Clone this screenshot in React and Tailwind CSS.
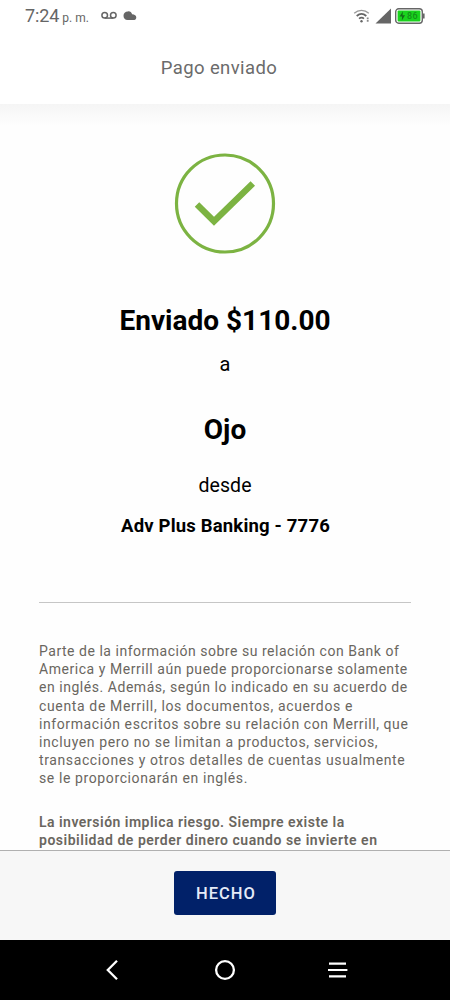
import clsx from 'clsx'

const notice = [
  ['Parte de la información sobre su relación con Bank of', 'tracking-[0.52px]'],
  ['America y Merrill aún puede proporcionarse solamente', 'tracking-[0.55px]'],
  ['en inglés. Además, según lo indicado en su acuerdo de', 'tracking-[0.54px]'],
  ['cuenta de Merrill, los documentos, acuerdos e', 'tracking-[0.64px]'],
  ['información escritos sobre su relación con Merrill, que', 'tracking-[0.59px]'],
  ['incluyen pero no se limitan a productos, servicios,', 'tracking-[0.61px]'],
  ['transacciones y otros detalles de cuentas usualmente', 'tracking-[0.61px]'],
  ['se le proporcionarán en inglés.', 'tracking-[0.61px]'],
]

const risk = [
  ['La inversión implica riesgo. Siempre existe la', 'tracking-[0.48px]'],
  ['posibilidad de perder dinero cuando se invierte en', 'tracking-[0.52px]'],
]

function Lines({ items, className }) {
  return (
    <p className={clsx('whitespace-nowrap text-[14px] leading-[18.2px] text-[#6a665f]', className)}>
      {items.map(([line, tracking]) => (
        <span key={line} className={clsx('block', tracking)}>{line}</span>
      ))}
    </p>
  )
}

function StatusBar() {
  return (
    <div className="flex h-8 items-center justify-between pl-[25px] pr-[25px] text-[#666]">
      <div className="flex items-center">
        <span className="text-[18px] leading-8 tracking-[-0.1px]">7:24</span>
        <span className="ml-[3px] mt-[4px] text-[12px] leading-8">p. m.</span>
        <svg className="ml-3 h-4 w-4" viewBox="0 0 16 16" fill="none" stroke="currentColor" strokeWidth="1.5">
          <circle cx="3.7" cy="7.3" r="2.8" />
          <circle cx="12.3" cy="7.3" r="2.8" />
          <path d="M3.7 10.1h8.6" />
        </svg>
        <svg className="ml-[6px] h-4 w-[14px]" viewBox="0 0 14 16" fill="currentColor">
          <path d="M4.8 3.4a4 4 0 0 1 4.3 2.9c2.4 0 4.2 1.3 4.2 3.1 0 1.6-1.2 2.6-3 2.6H4.6C2 12 .5 10 .5 7.7c0-2.4 1.8-4.3 4.3-4.3z" />
        </svg>
      </div>
      <div className="flex items-center">
        <svg className="h-4 w-[17px]" viewBox="0 0 17 16" fill="none" stroke="currentColor">
          <path d="M1.2 5.2C5.4 1.3 11.6 1.3 15.8 5.2" stroke="#999" strokeWidth="1.3" />
          <path d="M3.7 8C6.6 5.4 10.4 5.4 13.3 8" strokeWidth="1.8" />
          <path d="M6 10.7c1.6-1.3 3.5-1.3 5 0" strokeWidth="1.6" />
          <circle cx="8.5" cy="13.2" r="1.2" fill="currentColor" stroke="none" />
          <path d="M14.7 9.6v1.6M14.7 12v1.8" strokeWidth="1.8" stroke="#888" />
        </svg>
        <svg className="ml-[5px] h-4 w-4" viewBox="0 0 16 16" fill="currentColor">
          <path d="M16 .5v15H.5z" />
        </svg>
        <svg className="ml-1 h-4 w-[30px]" viewBox="0 0 30 16">
          <rect x=".7" y=".8" width="26.6" height="14.4" rx="3" fill="#fff" stroke="#666" strokeWidth="1.4" />
          <path d="M28 5.5h1.6v5H28z" fill="#666" />
          <rect x="2.6" y="2.6" width="22.8" height="10.8" rx="1" fill="#19d31d" />
          <path d="M8 3.3 4.6 8.6h2.5L6.8 12.6 10 7.3H7.5z" fill="#146b18" />
          <text x="12" y="11.4" fontSize="9" fontWeight="500" fill="#139019" letterSpacing=".3">86</text>
        </svg>
      </div>
    </div>
  )
}

function NavBar() {
  return (
    <nav className="flex h-[60px] items-center justify-between bg-black px-[100px] text-white">
      <svg className="h-6 w-6" viewBox="0 0 24 24" fill="none" stroke="currentColor" strokeWidth="2.3">
        <path d="M17 2.8 7.8 12l9.2 9.2" />
      </svg>
      <svg className="h-6 w-6" viewBox="0 0 24 24" fill="none" stroke="currentColor" strokeWidth="2.3">
        <circle cx="12" cy="12" r="8.9" />
      </svg>
      <svg className="h-6 w-6" viewBox="0 0 24 24" fill="none" stroke="currentColor" strokeWidth="2.2">
        <path d="M3 5.7h17M2 12h19.4M3 18.3h17" />
      </svg>
    </nav>
  )
}

export default function App() {
  return (
    <div className="flex h-[1000px] w-[450px] flex-col overflow-hidden bg-[#fefefe] font-['Roboto',sans-serif]">
      <header className="h-[104px] shrink-0 bg-white">
        <StatusBar />
        <h1 className="pt-[22px] pr-[12px] text-center text-[18.5px] leading-7 tracking-[0.4px] text-[#6b6b6b]">Pago enviado</h1>
      </header>

      <main className="min-h-0 flex-1 overflow-hidden text-black">
        <div className="h-[22px] bg-linear-to-b from-[#f5f5f5] to-[#fefefe]" />
        <svg className="mx-auto mt-[27px] h-[102px] w-[102px]" viewBox="0 0 102 102" fill="none" stroke="#7cb342">
          <circle cx="51" cy="50.5" r="48.5" strokeWidth="3.2" />
          <path d="M23 51.5 40 68.2 78.8 30.5" strokeWidth="6.4" />
        </svg>
        <section className="text-center">
          <h2 className="mt-[46px] text-[28px] font-bold leading-10">Enviado $110.00</h2>
          <p className="mt-[9px] text-[20px] leading-7">a</p>
          <h2 className="mt-[32px] text-[28px] font-bold leading-10">Ojo</h2>
          <p className="mt-[22px] text-[19.5px] leading-7 tracking-[0.1px]">desde</p>
          <h3 className="mt-[12px] pl-px text-[18.5px] font-bold leading-7 tracking-[0.18px]">Adv Plus Banking - 7776</h3>
        </section>
        <div className="mx-[39px] mt-[62px] border-t border-[#c6c6c6]">
          <Lines items={notice} className="mt-[39px]" />
          <Lines items={risk} className="mt-[25px] font-semibold" />
        </div>
      </main>

      <footer className="h-[90px] shrink-0 border-t border-[#b0b0b0] bg-[#f7f7f7] pt-5 text-center">
        <button className="h-11 w-[102px] rounded-[3px] bg-[#012169] pt-[2px] pl-[2px] text-[16.5px] font-medium tracking-[1px] text-[#e4ebf8]">HECHO</button>
      </footer>
      <NavBar />
    </div>
  )
}
